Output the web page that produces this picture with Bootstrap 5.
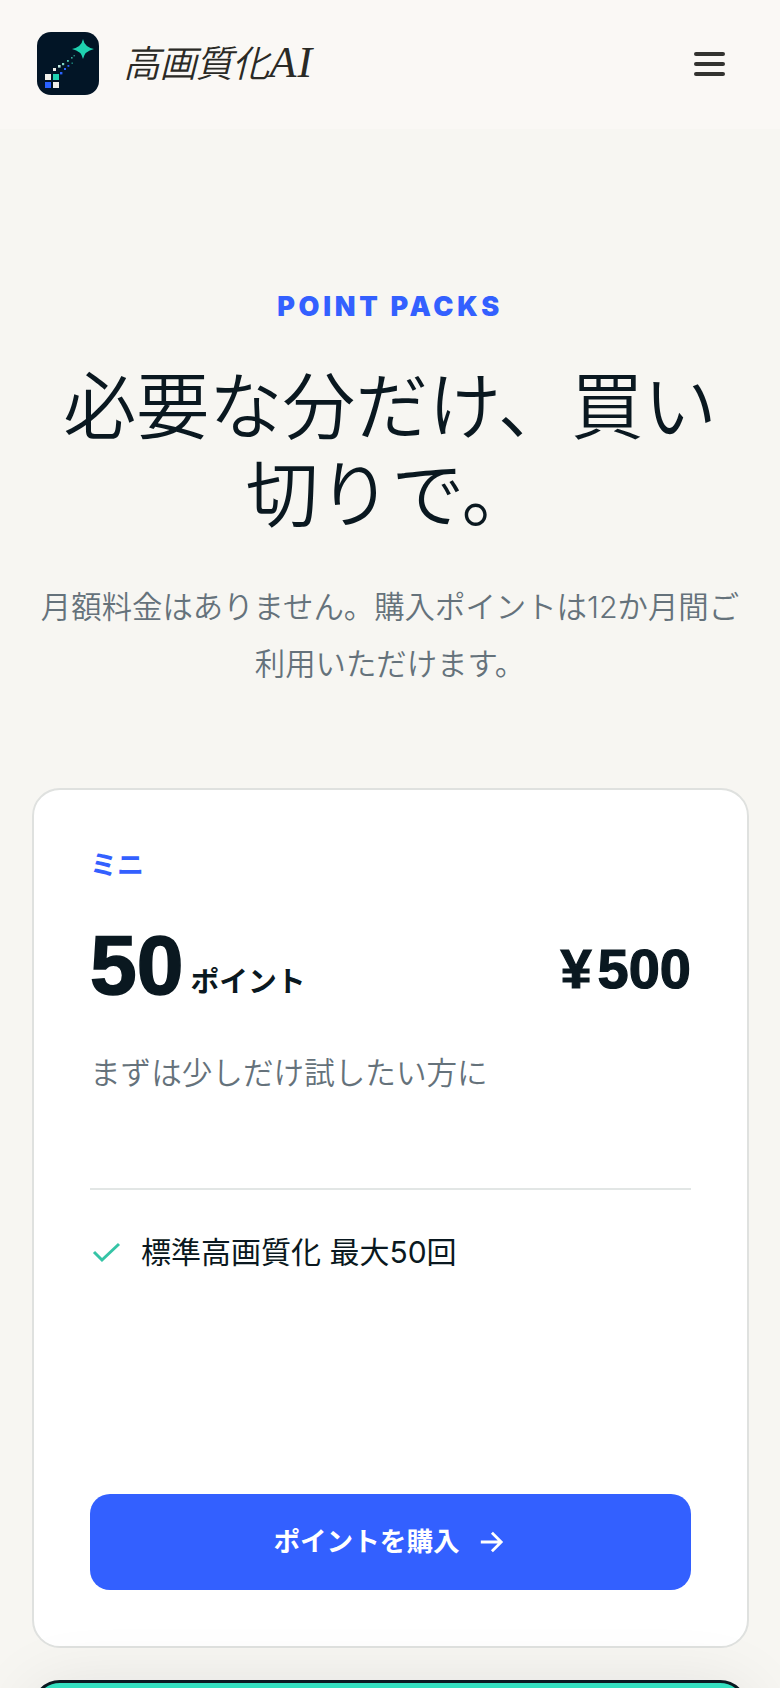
<!doctype html>
<html lang="ja">
<head>
<meta charset="utf-8">
<title>高画質化AI</title>
<link href="https://cdn.jsdelivr.net/npm/bootstrap@5.3.0/dist/css/bootstrap.min.css" rel="stylesheet">
<style>
html,body{height:1688px;overflow:hidden}
body{background:#f7f6f2;color:#0a1820;font-family:Inter,"Noto Sans CJK JP",sans-serif}
.site-head{height:129px;background:#faf8f5;padding:0 55px 2px 37px}
.logo-box{width:62px;height:63px;border-radius:14px;background:#021526;flex:none}
.logo-word{font-family:"Liberation Serif","Noto Sans CJK JP",serif;font-style:italic;font-size:37px;font-weight:350;color:#2a2a26;line-height:1;margin-left:24px;letter-spacing:-.6px;margin-bottom:2px}
.logo-latin{font-size:44px;letter-spacing:1px;margin-left:1px;font-weight:400}
.burger{padding:0;border:0;background:none;width:31px;display:flex;flex-direction:column;gap:6px}
.burger i{display:block;height:4px;border-radius:2px;background:#333330}
.hero-wrap{padding:162px 32px 0;text-align:center}
.eyebrow{font-size:27px;line-height:32px;font-weight:900;letter-spacing:3.7px;color:#3360ff;margin:0}
.hero-title{font-family:"Noto Sans CJK JP",sans-serif;font-size:73px;line-height:88px;font-weight:350;margin:34px 0 0;color:#0a1820}
.hero-sub{font-size:30.4px;line-height:57px;font-weight:350;color:#65727b;margin:46px 0 0}
.pack{margin:95px 31px 0 32px;background:#fff;border:2px solid #dfe1df;border-radius:28px;height:860px;padding:60px 56px 56px;display:flex;flex-direction:column}
.pack-name{font-size:27px;line-height:32px;font-weight:700;color:#3360ff}
.pack-row{margin-top:47px;height:72px}
.pack-pts{font-family:"Liberation Sans",sans-serif;font-size:84px;line-height:72px;font-weight:700;-webkit-text-stroke:1.6px #0a1820}
.pack-unit{font-size:28.8px;line-height:40px;font-weight:700;margin:0 0 -1px 7px}
.pack-price{font-family:"Liberation Sans",sans-serif;font-size:56px;line-height:72px;font-weight:700;-webkit-text-stroke:1.2px #0a1820;margin-bottom:-4px}
.yen-sign{margin-right:6px}
.pack-desc{font-size:30.6px;line-height:44px;font-weight:350;color:#65727b;margin-top:50px}
.pack-line{border-top:2px solid #e2e6e5;margin-top:93px}
.pack-item{font-size:30px;line-height:44px;margin-top:40px;color:#0a1820;gap:20px;padding-left:1px}
.buy-btn{margin-top:auto;height:96px;border-radius:20px;background:#3360ff;color:#fff;font-size:26.6px;font-weight:700;border:0;gap:18px;padding:0 16px 0 12px}
.buy-btn:hover{background:#3360ff;color:#fff}
.teal-card{margin:32px 32px 0;height:200px;background:#34e0c0;border:3px solid #0a1820;border-radius:28px;box-shadow:0 10px 70px rgba(10,24,32,.1);position:relative}
</style>
</head>
<body>
<header class="site-head d-flex align-items-center justify-content-between">
  <a class="d-flex align-items-center text-decoration-none" href="#">
    <svg class="logo-box" viewBox="0 0 62 63" aria-hidden="true">
      <path d="M46 7 Q47.5 15 57 17 Q47.5 19 46 27 Q44.5 19 35 17 Q44.5 15 46 7Z" fill="#1fd1b0"/>
      <rect x="8" y="42" width="6" height="6" fill="#f1f0ea"/><rect x="16" y="42" width="6" height="6" fill="#1fd1b0"/>
      <rect x="8" y="50" width="6" height="6" fill="#2a62ff"/><rect x="16" y="50" width="6" height="6" fill="#f1f0ea"/>
      <rect x="16" y="36" width="3" height="3" fill="#f1f0ea"/><rect x="21" y="33" width="2.6" height="2.6" fill="#bfe8e0"/>
      <rect x="25" y="31" width="2.2" height="2.2" fill="#7fd8c8"/><rect x="30" y="28" width="1.8" height="1.8" fill="#55c8b8"/>
      <rect x="34" y="25" width="1.6" height="1.6" fill="#33a898"/><rect x="36.5" y="23" width="1.4" height="1.4" fill="#2a8f82"/>
      <rect x="23" y="40" width="2.4" height="2.4" fill="#2a62ff"/>
      <rect x="27" y="36" width="2" height="2" fill="#2a62ff"/><rect x="30.5" y="33" width="1.8" height="1.8" fill="#2a62ff"/>
      <rect x="34.5" y="30.5" width="1.4" height="1.4" fill="#1e8f84"/>
    </svg>
    <span class="logo-word">高画質化<span class="logo-latin">AI</span></span>
  </a>
  <button class="burger" type="button" aria-label="メニュー"><i></i><i></i><i></i></button>
</header>
<main>
  <section class="hero-wrap">
    <p class="eyebrow">POINT PACKS</p>
    <h1 class="hero-title">必要な分だけ、買い切りで。</h1>
    <p class="hero-sub">月額料金はありません。購入ポイントは12か月間ご利用いただけます。</p>
  </section>
  <section class="pack">
    <div class="pack-name">ミニ</div>
    <div class="pack-row d-flex justify-content-between align-items-end">
      <div class="d-flex align-items-end"><span class="pack-pts">50</span><span class="pack-unit">ポイント</span></div>
      <span class="pack-price"><span class="yen-sign">¥</span>500</span>
    </div>
    <p class="pack-desc mb-0">まずは少しだけ試したい方に</p>
    <div class="pack-line"></div>
    <div class="pack-item d-flex align-items-center">
      <svg width="30" height="30" viewBox="0 0 30 30" fill="none" stroke="#35c4a6" stroke-width="3"><path d="M3 15l8 8L28 7"/></svg>
      <span>標準高画質化 最大50回</span>
    </div>
    <button class="btn buy-btn d-flex align-items-center justify-content-center" type="button">ポイントを購入
      <svg width="26" height="26" viewBox="0 0 28 28" fill="none" stroke="#fff" stroke-width="3"><path d="M3 14h21M15 4l10 10-10 10"/></svg>
    </button>
  </section>
  <div class="teal-card"></div>
</main>
<script src="https://cdn.jsdelivr.net/npm/bootstrap@5.3.0/dist/js/bootstrap.bundle.min.js"></script>
</body>
</html>
